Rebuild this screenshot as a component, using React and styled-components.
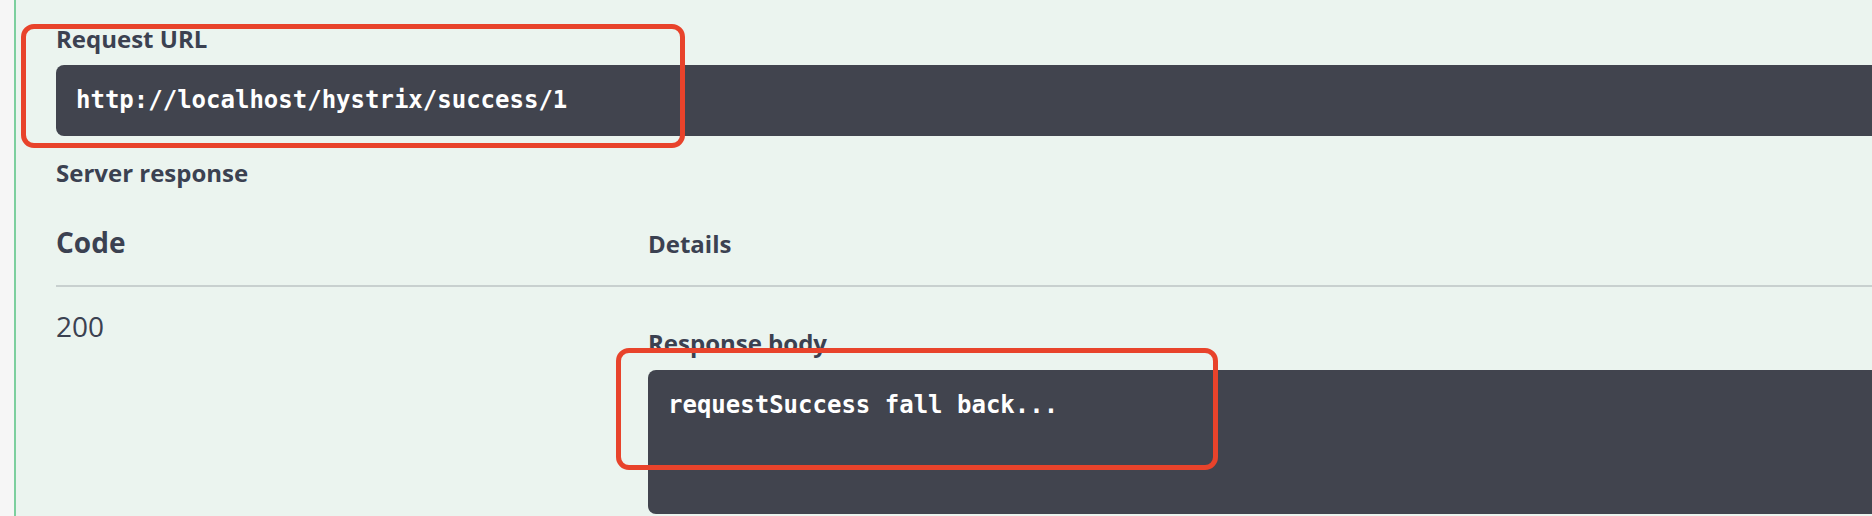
import React from 'react';
import styled, { createGlobalStyle } from 'styled-components';

const GlobalStyle = createGlobalStyle`
    html, body {
        margin: 0;
        padding: 0;
        background: #f6f6f6;
        overflow: hidden;
    }
    body {
        font-family: "Open Sans", "Noto Sans", sans-serif;
        color: #3b4151;
    }
`;

const App = () => {
    return (
        <Page>
            <GlobalStyle />
            <OpBlock>
                <Content>
                    <Section>
                        <SectionTitle>Request URL</SectionTitle>
                        <CodeBlock>http://localhost/hystrix/success/1</CodeBlock>
                        <Marker $top={0} $left={-35} $width={664} $height={124} />
                    </Section>

                    <SectionTitle $gap={22}>Server response</SectionTitle>

                    <HeaderRow>
                        <StatusHead>Code</StatusHead>
                        <DetailsHead>Details</DetailsHead>
                    </HeaderRow>

                    <BodyRow>
                        <StatusCell>200</StatusCell>
                        <DetailsCell>
                            <Section $gap={20}>
                                <SectionTitle>Response body</SectionTitle>
                                <CodeBlock $gap={12} $height={144}>requestSuccess fall back...</CodeBlock>
                                <Marker $top={20} $left={-32} $width={602} $height={122} />
                            </Section>
                        </DetailsCell>
                    </BodyRow>
                </Content>
            </OpBlock>
        </Page>
    );
};

const Page = styled.div`
    height: 516px;
    padding-left: 14px;
    box-sizing: border-box;
`;

const OpBlock = styled.section`
    height: 100%;
    background: #ebf4ef;
    border-left: 2px solid #7ccf9e;
    padding: 24px 0 0 40px;
    box-sizing: border-box;
    overflow: hidden;
`;

const Content = styled.div`
    margin-right: -40px;
`;

const Section = styled.div`
    position: relative;
    margin-top: ${p => p.$gap || 0}px;
`;

const SectionTitle = styled.h4`
    margin: ${p => p.$gap || 0}px 0 0;
    font-size: 24px;
    line-height: 30px;
    font-weight: 700;
    color: #3b4151;
`;

const CodeBlock = styled.pre`
    margin: ${p => p.$gap || 11}px 0 0;
    height: ${p => p.$height || 71}px;
    box-sizing: border-box;
    padding: 20px;
    background: #41444e;
    border-radius: 8px;
    color: #fff;
    font-family: "DejaVu Sans Mono", "Liberation Mono", monospace;
    font-size: 24px;
    line-height: 31px;
    font-weight: 700;
    white-space: pre;
`;

const Marker = styled.div`
    position: absolute;
    top: ${p => p.$top}px;
    left: ${p => p.$left}px;
    width: ${p => p.$width}px;
    height: ${p => p.$height}px;
    box-sizing: border-box;
    border: 5px solid #e8432b;
    border-radius: 13px;
    pointer-events: none;
`;

const HeaderRow = styled.div`
    display: flex;
    align-items: baseline;
    padding: 36px 0 25px;
    border-bottom: 2px solid rgba(59, 65, 81, 0.2);
`;

const StatusHead = styled.div`
    width: 592px;
    font-size: 28px;
    line-height: 36px;
    font-weight: 700;
`;

const DetailsHead = styled.div`
    font-size: 24px;
    line-height: 30px;
    font-weight: 700;
`;

const BodyRow = styled.div`
    display: flex;
    align-items: flex-start;
`;

const StatusCell = styled.div`
    width: 592px;
    padding-top: 21px;
    font-size: 28px;
    line-height: 36px;
    font-weight: 400;
`;

const DetailsCell = styled.div`
    flex: 1;
    padding-top: 21px;
`;

export default App;
